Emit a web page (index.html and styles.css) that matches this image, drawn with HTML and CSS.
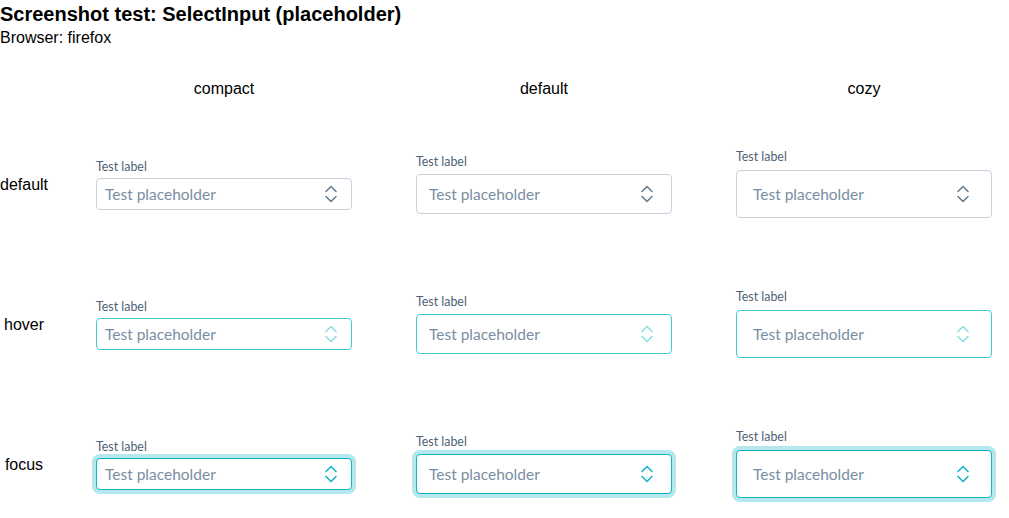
FILE: index.html
```html
<!DOCTYPE html>
<html lang="en">
<head>
<meta charset="utf-8">
<title>Screenshot test: SelectInput (placeholder)</title>
<link rel="stylesheet" href="styles.css">
</head>
<body>
<h1 class="title">Screenshot test: SelectInput (placeholder)</h1>
<div class="browser">Browser: firefox</div>
<div class="grid">
  <div class="corner"></div>
  <div class="col-head">compact</div>
  <div class="col-head">default</div>
  <div class="col-head">cozy</div>

  <div class="row-head">default</div>
  <div class="cell"><div class="field field--compact"><label class="field-label">Test label</label><div class="select"><span class="placeholder">Test placeholder</span><svg class="chev" viewBox="0 0 16 20" width="16" height="20"><path d="M3 7.5 L8 2.5 L13 7.5 M3 12.5 L8 17.5 L13 12.5"/></svg></div></div></div>
  <div class="cell"><div class="field field--default"><label class="field-label">Test label</label><div class="select"><span class="placeholder">Test placeholder</span><svg class="chev" viewBox="0 0 16 20" width="16" height="20"><path d="M3 7.5 L8 2.5 L13 7.5 M3 12.5 L8 17.5 L13 12.5"/></svg></div></div></div>
  <div class="cell"><div class="field field--cozy"><label class="field-label">Test label</label><div class="select"><span class="placeholder">Test placeholder</span><svg class="chev" viewBox="0 0 16 20" width="16" height="20"><path d="M3 7.5 L8 2.5 L13 7.5 M3 12.5 L8 17.5 L13 12.5"/></svg></div></div></div>

  <div class="row-head">hover</div>
  <div class="cell"><div class="field field--compact"><label class="field-label">Test label</label><div class="select select--hover"><span class="placeholder">Test placeholder</span><svg class="chev" viewBox="0 0 16 20" width="16" height="20"><path d="M3 7.5 L8 2.5 L13 7.5 M3 12.5 L8 17.5 L13 12.5"/></svg></div></div></div>
  <div class="cell"><div class="field field--default"><label class="field-label">Test label</label><div class="select select--hover"><span class="placeholder">Test placeholder</span><svg class="chev" viewBox="0 0 16 20" width="16" height="20"><path d="M3 7.5 L8 2.5 L13 7.5 M3 12.5 L8 17.5 L13 12.5"/></svg></div></div></div>
  <div class="cell"><div class="field field--cozy"><label class="field-label">Test label</label><div class="select select--hover"><span class="placeholder">Test placeholder</span><svg class="chev" viewBox="0 0 16 20" width="16" height="20"><path d="M3 7.5 L8 2.5 L13 7.5 M3 12.5 L8 17.5 L13 12.5"/></svg></div></div></div>

  <div class="row-head">focus</div>
  <div class="cell"><div class="field field--compact"><label class="field-label">Test label</label><div class="select select--focus"><span class="placeholder">Test placeholder</span><svg class="chev" viewBox="0 0 16 20" width="16" height="20"><path d="M3 7.5 L8 2.5 L13 7.5 M3 12.5 L8 17.5 L13 12.5"/></svg></div></div></div>
  <div class="cell"><div class="field field--default"><label class="field-label">Test label</label><div class="select select--focus"><span class="placeholder">Test placeholder</span><svg class="chev" viewBox="0 0 16 20" width="16" height="20"><path d="M3 7.5 L8 2.5 L13 7.5 M3 12.5 L8 17.5 L13 12.5"/></svg></div></div></div>
  <div class="cell"><div class="field field--cozy"><label class="field-label">Test label</label><div class="select select--focus"><span class="placeholder">Test placeholder</span><svg class="chev" viewBox="0 0 16 20" width="16" height="20"><path d="M3 7.5 L8 2.5 L13 7.5 M3 12.5 L8 17.5 L13 12.5"/></svg></div></div></div>
</div>
</body>
</html>
```

FILE: styles.css
```css
html, body {
  margin: 0;
  padding: 0;
  background: #ffffff;
  overflow: hidden;
}

body {
  font-family: "Liberation Sans", Arial, sans-serif;
  color: #000000;
  font-size: 16px;
}

.title {
  margin: 0;
  padding-top: 3px;
  font-size: 20px;
  line-height: 23px;
  font-weight: bold;
}

.browser {
  margin-top: 3px;
  line-height: 18px;
}

.grid {
  display: grid;
  grid-template-columns: 64px 320px 320px 320px;
  grid-template-rows: 67px 140px 140px 140px;
}

.col-head {
  text-align: center;
  padding-top: 33px;
  line-height: 18px;
}

.row-head {
  align-self: center;
  width: 48px;
  padding-top: 2px;
  text-align: center;
  line-height: 18px;
}

.cell {
  display: flex;
  align-items: center;
  justify-content: center;
}

.field {
  width: 256px;
  display: flex;
  flex-direction: column;
  font-family: Lato, "Noto Sans", sans-serif;
}

.field-label {
  font-size: 12.4px;
  line-height: 16px;
  color: #4f6275;
}

.select {
  display: flex;
  align-items: center;
  justify-content: space-between;
  box-sizing: border-box;
  border: 1px solid #c7d2dd;
  border-radius: 4px;
  background: #ffffff;
}

.placeholder {
  font-size: 15.5px;
  color: #7a8ea3;
}

.chev {
  display: block;
  flex: none;
}

.chev path {
  fill: none;
  stroke: #687d92;
  stroke-width: 1.6;
  stroke-linecap: round;
  stroke-linejoin: round;
}

.field--compact .field-label { margin-bottom: 3px; }
.field--compact .select { height: 32px; padding: 0 12px 0 8px; }

.field--default { margin-bottom: 1px; }
.field--default .field-label { margin-bottom: 4px; }
.field--default .select { height: 40px; padding: 0 16px 0 12px; }

.field--cozy { margin-bottom: 2px; }
.field--cozy .field-label { margin-bottom: 5px; }
.field--cozy .select { height: 48px; padding: 0 20px 0 16px; }

.select--hover {
  border-color: #3fcbd5;
}
.select--hover .chev path {
  stroke: #8cdfe5;
}

.select--focus {
  border-color: #10b4c1;
  box-shadow: 0 0 0 4px #b4e8ec;
}
.select--focus .chev path {
  stroke: #14b5c2;
}
```
